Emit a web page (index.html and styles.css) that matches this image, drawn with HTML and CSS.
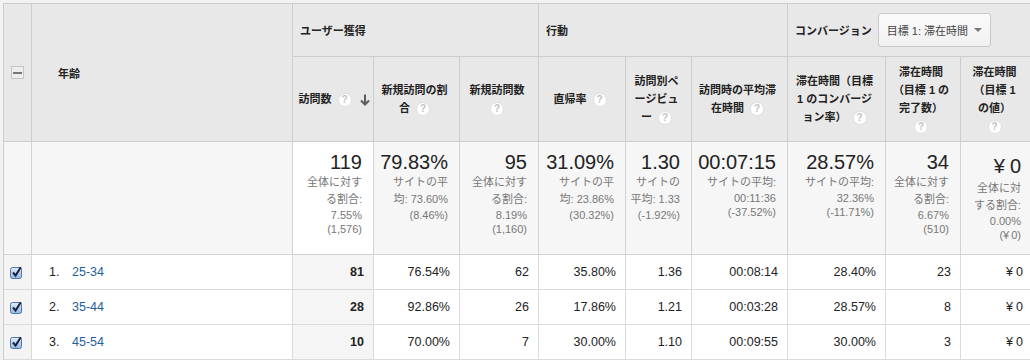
FILE: index.html
```html
<!DOCTYPE html>
<html lang="ja">
<head>
<meta charset="utf-8">
<title>年齢レポート</title>
<link rel="stylesheet" href="styles.css">
</head>
<body>
<table class="report">
  <colgroup>
    <col class="w-check"><col class="w-dim"><col class="w-visits"><col class="w-newpct"><col class="w-newvis">
    <col class="w-bounce"><col class="w-ppv"><col class="w-dur"><col class="w-conv"><col class="w-comp"><col class="w-val">
  </colgroup>
  <thead>
    <tr class="group-row">
      <th class="check-head" rowspan="2"><span class="minus-box"><span class="minus-bar"></span></span></th>
      <th class="dim-head" rowspan="2">年齢</th>
      <th class="group" colspan="3">ユーザー獲得</th>
      <th class="group" colspan="3">行動</th>
      <th class="group" colspan="3">
        <div class="group-conv">
          <span>コンバージョン</span>
          <button class="goal-select" type="button">目標 1: 滞在時間<span class="caret"></span></button>
        </div>
      </th>
    </tr>
    <tr class="metric-row">
      <th class="metric metric-sorted">訪問数<span class="help">?</span><svg class="sort-arrow" width="10" height="12" viewBox="0 0 10 12"><path d="M5 0.5V10.5M1 6.5L5 10.5L9 6.5" fill="none" stroke="#5c5c5c" stroke-width="2"/></svg></th>
      <th class="metric">新規訪問の割<br>合<span class="help">?</span></th>
      <th class="metric">新規訪問数<br><span class="help solo">?</span></th>
      <th class="metric">直帰率<span class="help">?</span></th>
      <th class="metric">訪問別ペ<br>ージビュ<br>ー<span class="help">?</span></th>
      <th class="metric">訪問時の平均滞<br>在時間<span class="help">?</span></th>
      <th class="metric">滞在時間（目標<br>1 のコンバージ<br>ョン率）<span class="help">?</span></th>
      <th class="metric">滞在時間<br>（目標 1 の<br>完了数）<br><span class="help solo">?</span></th>
      <th class="metric">滞在時間<br>（目標 1<br>の値）<br><span class="help solo">?</span></th>
    </tr>
  </thead>
  <tbody>
    <tr class="summary">
      <td></td>
      <td></td>
      <td class="sorted"><span class="total">119</span><span class="sub"><span class="j">全体に対す</span><span class="j">る割合:</span><span class="n">7.55%</span><span class="n">(1,576)</span></span></td>
      <td><span class="total">79.83%</span><span class="sub"><span class="j">サイトの平</span><span class="j">均: 73.60%</span><span class="n">(8.46%)</span></span></td>
      <td><span class="total">95</span><span class="sub"><span class="j">全体に対す</span><span class="j">る割合:</span><span class="n">8.19%</span><span class="n">(1,160)</span></span></td>
      <td><span class="total">31.09%</span><span class="sub"><span class="j">サイトの平</span><span class="j">均: 23.86%</span><span class="n">(30.32%)</span></span></td>
      <td><span class="total">1.30</span><span class="sub"><span class="j">サイトの</span><span class="j">平均: 1.33</span><span class="n">(-1.92%)</span></span></td>
      <td><span class="total">00:07:15</span><span class="sub"><span class="j">サイトの平均:</span><span class="n">00:11:36</span><span class="n">(-37.52%)</span></span></td>
      <td><span class="total">28.57%</span><span class="sub"><span class="j">サイトの平均:</span><span class="n">32.36%</span><span class="n">(-11.71%)</span></span></td>
      <td><span class="total">34</span><span class="sub"><span class="j">全体に対す</span><span class="j">る割合:</span><span class="n">6.67%</span><span class="n">(510)</span></span></td>
      <td class="yen-cell"><span class="total"><span class="yen">¥</span>0</span><span class="sub"><span class="j">全体に対</span><span class="j">する割合:</span><span class="n">0.00%</span><span class="n">(<span class="yen-s">¥</span>0)</span></span></td>
    </tr>
    <tr class="data">
      <td class="check"><svg class="cb" width="13" height="13" viewBox="0 0 13 13"><defs><linearGradient id="cbg1" x1="0" y1="0" x2="0" y2="1"><stop offset="0" stop-color="#e2edf9"/><stop offset="1" stop-color="#93b6e2"/></linearGradient></defs><rect x="0.5" y="1.5" width="11" height="11" rx="2" fill="url(#cbg1)" stroke="#4e77ac"/><path d="M3 6.5L5.6 9.6L10.8 1.2" fill="none" stroke="#16223a" stroke-width="2"/></svg></td>
      <td class="dim"><span class="idx">1.</span><a class="dim-link" href="#">25-34</a></td>
      <td class="sorted">81</td><td>76.54%</td><td>62</td><td>35.80%</td><td>1.36</td><td>00:08:14</td><td>28.40%</td><td>23</td><td><span class="yen-d">¥</span>0</td>
    </tr>
    <tr class="data">
      <td class="check"><svg class="cb" width="13" height="13" viewBox="0 0 13 13"><defs><linearGradient id="cbg2" x1="0" y1="0" x2="0" y2="1"><stop offset="0" stop-color="#e2edf9"/><stop offset="1" stop-color="#93b6e2"/></linearGradient></defs><rect x="0.5" y="1.5" width="11" height="11" rx="2" fill="url(#cbg2)" stroke="#4e77ac"/><path d="M3 6.5L5.6 9.6L10.8 1.2" fill="none" stroke="#16223a" stroke-width="2"/></svg></td>
      <td class="dim"><span class="idx">2.</span><a class="dim-link" href="#">35-44</a></td>
      <td class="sorted">28</td><td>92.86%</td><td>26</td><td>17.86%</td><td>1.21</td><td>00:03:28</td><td>28.57%</td><td>8</td><td><span class="yen-d">¥</span>0</td>
    </tr>
    <tr class="data">
      <td class="check"><svg class="cb" width="13" height="13" viewBox="0 0 13 13"><defs><linearGradient id="cbg3" x1="0" y1="0" x2="0" y2="1"><stop offset="0" stop-color="#e2edf9"/><stop offset="1" stop-color="#93b6e2"/></linearGradient></defs><rect x="0.5" y="1.5" width="11" height="11" rx="2" fill="url(#cbg3)" stroke="#4e77ac"/><path d="M3 6.5L5.6 9.6L10.8 1.2" fill="none" stroke="#16223a" stroke-width="2"/></svg></td>
      <td class="dim"><span class="idx">3.</span><a class="dim-link" href="#">45-54</a></td>
      <td class="sorted">10</td><td>70.00%</td><td>7</td><td>30.00%</td><td>1.10</td><td>00:09:55</td><td>30.00%</td><td>3</td><td><span class="yen-d">¥</span>0</td>
    </tr>
  </tbody>
</table>
</body>
</html>
```

FILE: styles.css
```css
* { box-sizing: border-box; }

html, body {
  margin: 0;
  overflow: hidden;
}

body {
  padding: 3px 0 0 3px;
  background: #f2f2f2;
  font-family: "Liberation Sans", "Noto Sans CJK JP", sans-serif;
  color: #222;
}

.report {
  border-collapse: separate;
  border-spacing: 0;
  table-layout: fixed;
  width: 1030px;
  border-top: 1px solid #cdcdcd;
  border-left: 1px solid #cdcdcd;
  background: #fff;
}

.w-check { width: 28px; }
.w-dim { width: 261px; }
.w-visits { width: 81px; }
.w-newpct { width: 86px; }
.w-newvis { width: 79px; }
.w-bounce { width: 87px; }
.w-ppv { width: 66px; }
.w-dur { width: 96px; }
.w-conv { width: 98px; }
.w-comp { width: 75px; }
.w-val { width: 72px; }

.report th,
.report td {
  border-right: 1px solid #d3d3d3;
  border-bottom: 1px solid #d3d3d3;
  padding: 0;
}

/* ---------- header ---------- */
.report thead th {
  background: #e8e8e8;
  font-size: 11px;
  font-weight: bold;
  color: #222;
  border-color: #cdcdcd;
}

.group-row { height: 53px; }
.metric-row { height: 85px; }

.check-head {
  text-align: center;
  vertical-align: middle;
}

.minus-box {
  display: inline-flex;
  align-items: center;
  justify-content: center;
  width: 13px;
  height: 13px;
  border: 1px solid #c6c6c6;
  background: #ededed;
  vertical-align: middle;
}

.minus-bar {
  display: block;
  width: 9px;
  height: 2px;
  background: #777;
}

.dim-head {
  text-align: left;
  padding-left: 26px !important;
  vertical-align: middle;
}

.group {
  text-align: left;
  vertical-align: middle;
  padding-left: 7px !important;
}

.group-conv {
  display: flex;
  align-items: center;
  gap: 6px;
}

.goal-select {
  display: flex;
  align-items: center;
  justify-content: space-between;
  width: 113px;
  height: 34px;
  padding: 0 8px 0 8px;
  border: 1px solid #c9c9c9;
  border-radius: 3px;
  background: linear-gradient(#fbfbfb, #f1f1f1);
  font-family: "Liberation Sans", "Noto Sans CJK JP", sans-serif;
  font-size: 11px;
  font-weight: normal;
  color: #444;
  white-space: nowrap;
}

.caret {
  width: 0;
  height: 0;
  border-left: 4px solid transparent;
  border-right: 4px solid transparent;
  border-top: 4px solid #7a7a7a;
}

.metric {
  text-align: center;
  vertical-align: middle;
  line-height: 18px;
  white-space: nowrap;
  padding: 0 8px 0 4px !important;
}

.metric-sorted {
  padding: 0 2px 0 4px !important;
}

.help {
  display: inline-block;
  width: 14px;
  height: 14px;
  margin-left: 6px;
  border-radius: 50%;
  background: #fff;
  border: 1px solid #e0e0e0;
  color: #c2c2c2;
  font-size: 10px;
  font-weight: bold;
  line-height: 12px;
  text-align: center;
  vertical-align: middle;
}

.help.solo { margin-left: 0; }

.sort-arrow {
  margin-left: 8px;
  vertical-align: middle;
}

/* ---------- summary ---------- */
.summary { height: 113px; }

.summary td {
  background: #f6f6f6;
  vertical-align: top;
  text-align: right;
  padding: 9px 11px 0 4px;
  white-space: nowrap;
}

.summary td.sorted { background: #fff; }

.total {
  display: block;
  font-size: 20px;
  line-height: 23px;
  color: #222;
}

.sub {
  display: block;
  font-size: 11px;
  line-height: 14px;
  color: #777;
}

.sub .j { display: block; line-height: 17px; }
.sub .n { display: block; }

.summary td.yen-cell { padding-top: 11px; }
.yen-cell .total { line-height: 27px; }
.yen { margin-right: 5px; }
.yen-s { margin-right: 2px; }

/* ---------- data rows ---------- */
.data { height: 35px; }

.data td {
  font-size: 12.5px;
  text-align: right;
  vertical-align: middle;
  padding: 0 9px 0 4px;
  color: #222;
  border-color: #dadada;
  white-space: nowrap;
}

.data td.check {
  background: #f4f4f4;
  text-align: center;
  padding: 0;
}

.cb { display: block; margin: 0 auto 0 6px; }

.data td.dim {
  text-align: left;
  padding-left: 17px;
}

.idx {
  display: inline-block;
  width: 23px;
}

.dim-link {
  color: #1f5e9e;
  text-decoration: none;
}

.data td.sorted {
  background: #f5f5f5;
  font-weight: bold;
}

.yen-d { margin-right: 3px; }
```
